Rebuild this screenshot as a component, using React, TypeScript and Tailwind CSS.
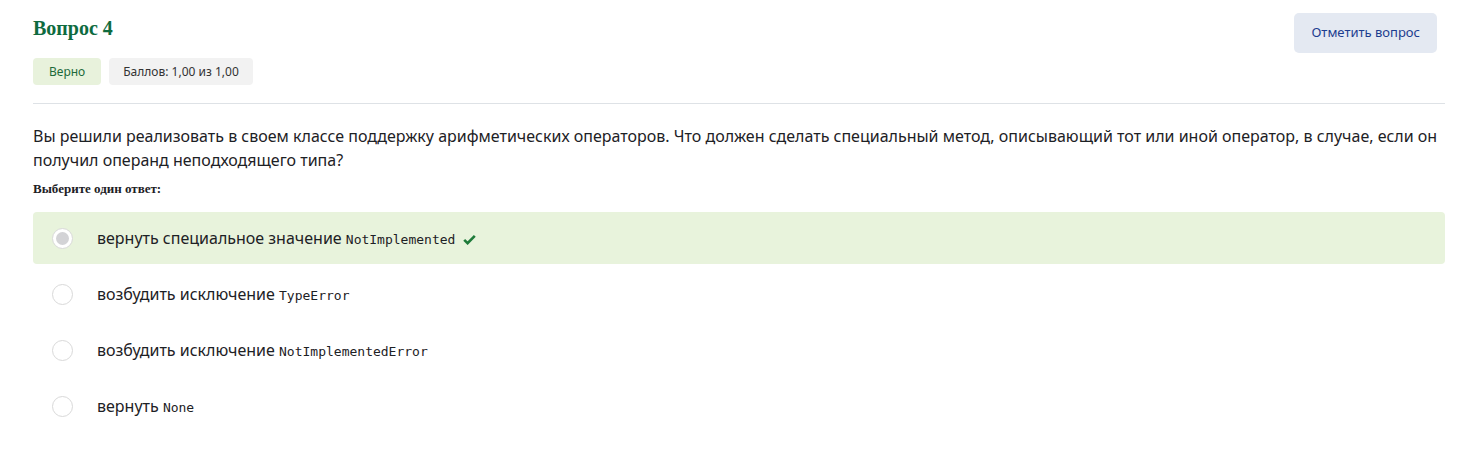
import React from "react";

const sans = "font-['Noto_Sans','Open_Sans',sans-serif]";
const serif = "font-['Liberation_Serif','DejaVu_Serif',serif]";
const mono = "font-['DejaVu_Sans_Mono','Liberation_Mono',monospace]";

type Answer = { text: string; code: string; correct?: boolean };

const answers: Answer[] = [
  { text: "вернуть специальное значение", code: "NotImplemented", correct: true },
  { text: "возбудить исключение", code: "TypeError" },
  { text: "возбудить исключение", code: "NotImplementedError" },
  { text: "вернуть", code: "None" },
];

function Check() {
  return (
    <svg width="13" height="11" viewBox="0 0 13 11" className="ml-2 inline-block">
      <path d="M1.2 5.8 L4.6 9.2 L11.8 1.8" fill="none" stroke="#1e7b3a" strokeWidth="2.6" />
    </svg>
  );
}

export default function App() {
  return (
    <div className={`min-h-[467px] bg-white pl-[33px] pr-[24px] pt-[13px] text-[#1d2125] ${sans}`}>
      <div className="flex items-start justify-between pr-[8px]">
        <div>
          <h3 className={`mt-[3px] text-[20px] font-bold leading-[24px] text-[#0f6b3f] ${serif}`}>Вопрос 4</h3>
          <div className="mt-[18px] flex gap-2 text-[12px]">
            <span className="rounded-[4px] bg-[#e8f2dc] px-[16px] py-[5px] leading-[17px] text-[#1d6a3a]">Верно</span>
            <span className="rounded-[4px] bg-[#f2f2f2] px-[14px] py-[5px] leading-[17px] text-[#333]">Баллов: 1,00 из 1,00</span>
          </div>
        </div>
        <button className="h-[40px] rounded-[5px] bg-[#e4e9f2] px-[17px] text-[13px] text-[#1c3d8f]">
          Отметить вопрос
        </button>
      </div>
      <div className="mt-[18px] border-t border-[#dee2e6]" />
      <p className="mt-[20px] text-[16px] leading-[24px]">
        Вы решили реализовать в своем классе поддержку арифметических операторов. Что должен сделать специальный метод, описывающий тот или иной оператор, в случае, если он получил операнд неподходящего типа?
      </p>
      <div className={`mt-[9px] text-[13px] font-bold leading-[16px] ${serif}`}>Выберите один ответ:</div>
      <div className="mt-[15px] flex flex-col gap-[4px]">
        {answers.map((a, i) => (
          <div
            key={i}
            className={`flex h-[52px] items-center rounded-[4px] pl-[19px] ${a.correct ? "bg-[#e8f3dc]" : ""}`}
          >
            <span className="flex h-[21px] w-[21px] items-center justify-center rounded-full border border-[#d9d9d9] bg-white">
              {a.correct ? <span className="h-[13px] w-[13px] rounded-full bg-[#d3d3d6]" /> : null}
            </span>
            <span className="ml-[24px] text-[16px]">
              {a.text} <span className={`text-[13px] ${mono}`}>{a.code}</span>
              {a.correct ? <Check /> : null}
            </span>
          </div>
        ))}
      </div>
    </div>
  );
}
